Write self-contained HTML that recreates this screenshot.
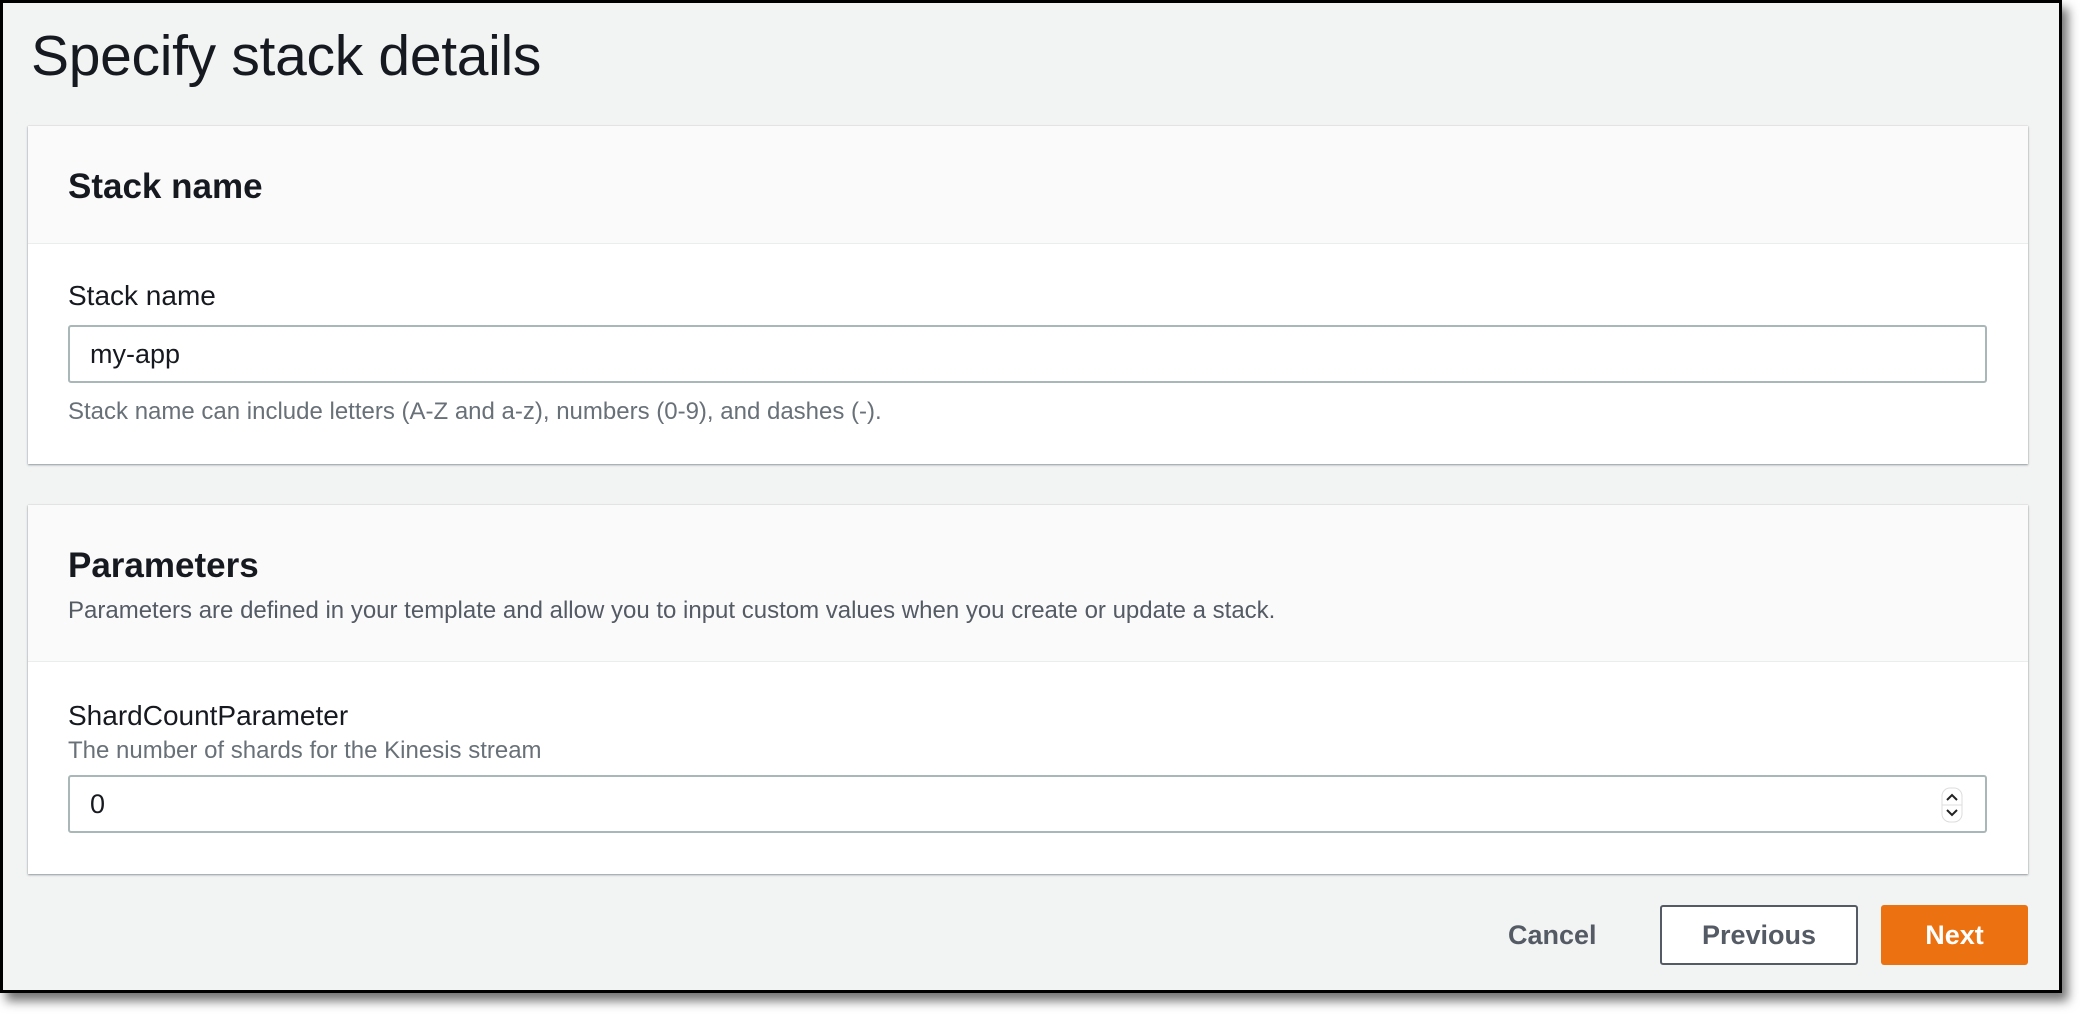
<!DOCTYPE html>
<html><head><style>
*{box-sizing:border-box;margin:0;padding:0}
body{width:2080px;height:1014px;background:#fff;position:relative;overflow:hidden;font-family:"Liberation Sans",Arial,sans-serif;color:#16191f}
.frame{position:absolute;left:0;top:0;width:2062px;height:993px;background:#f2f3f3;border:3px solid #000;box-shadow:6px 8px 10px rgba(0,0,0,.55)}
.abs{position:absolute}
h1{position:absolute;left:28px;top:20px;font-size:57px;font-weight:400;letter-spacing:-0.3px}
.panel{position:absolute;left:25px;width:2000px;background:#fff;box-shadow:0 1px 2px rgba(0,28,36,.4),0 0 1px rgba(0,28,36,.2)}
.ph{position:absolute;left:0;top:0;width:100%;background:#fafafa;border-bottom:1px solid #eaeded}
.h2{position:absolute;left:40px;font-size:35px;font-weight:700}
.lbl{position:absolute;left:40px;font-size:28px}
.help{position:absolute;left:40px;font-size:24px;color:#687078}
.inp{position:absolute;left:40px;width:1919px;height:58px;border:2px solid #aab7b8;border-radius:3px;background:#fff;font-size:27px;padding:12px 20px}
.btn{position:absolute;top:902px;height:60px;border-radius:3px;font-size:27px;font-weight:700;text-align:center;line-height:56px}
</style></head><body>
<div class="frame">
<h1>Specify stack details</h1>
<div class="panel" style="top:123px;height:338px">
 <div class="ph" style="height:118px"></div>
 <div class="h2" style="top:41px">Stack name</div>
 <div class="lbl" style="top:154px">Stack name</div>
 <div class="inp" style="top:199px">my-app</div>
 <div class="help" style="top:272px">Stack name can include letters (A-Z and a-z), numbers (0-9), and dashes (-).</div>
</div>
<div class="panel" style="top:502px;height:369px">
 <div class="ph" style="height:157px"></div>
 <div class="h2" style="top:41px">Parameters</div>
 <div class="help" style="top:92px;color:#545b64">Parameters are defined in your template and allow you to input custom values when you create or update a stack.</div>
 <div class="lbl" style="top:195px">ShardCountParameter</div>
 <div class="help" style="top:232px">The number of shards for the Kinesis stream</div>
 <div class="inp" style="top:270px">0
  <svg class="abs" style="right:22px;top:10px" width="22" height="36" viewBox="0 0 22 36"><rect x="1" y="1" width="20" height="34" rx="8" fill="#fff" stroke="#ddd"/><line x1="1" y1="18" x2="21" y2="18" stroke="#ddd"/><path d="M6 13l5-5 5 5M6 23l5 5 5-5" fill="none" stroke="#222" stroke-width="2"/></svg>
 </div>
</div>
<div class="abs" style="left:1505px;top:902px;width:90px;line-height:60px;font-size:27px;font-weight:700;color:#545b64">Cancel</div>
<div class="btn" style="left:1657px;width:198px;border:2px solid #545b64;background:#fff;color:#545b64">Previous</div>
<div class="btn" style="left:1878px;width:147px;background:#ec7211;color:#fff;line-height:60px">Next</div>
</div>
</body></html>
